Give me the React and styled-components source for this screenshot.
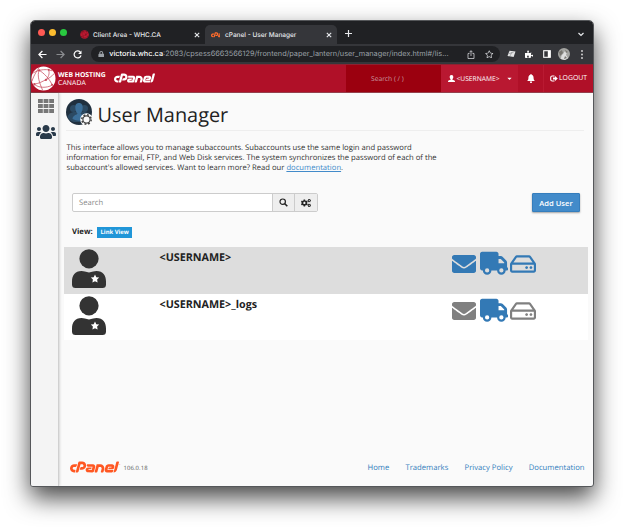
import React from "react";
import styled, { createGlobalStyle } from "styled-components";
import { FaCpanel, FaRegHdd, FaEnvelope, FaUsers, FaCogs, FaLock, FaPuzzlePiece, FaCaretDown, FaRegStar } from "react-icons/fa";
import { FaTruck } from "react-icons/fa6";

const GlobalStyle = createGlobalStyle`
  * { box-sizing: border-box; }
  body { margin: 0; background: #fff; overflow: hidden; font-family: "Open Sans", sans-serif; text-rendering: geometricPrecision; }
  svg { display: block; flex: none; }
`;

const Stage = styled.div`
  width: 624px;
  height: 527px;
  padding: 20px 30px 40px 30px;
  overflow: hidden;
`;
const Window = styled.div`
  width: 564px;
  height: 467px;
  border: 1px solid #55575a;
  border-radius: 5px 5px 3px 3px;
  overflow: hidden;
  background: #fafafa;
  box-shadow: 0 11px 25px rgba(0, 0, 0, 0.72);
  display: flex;
  flex-direction: column;
`;

/* Browser chrome */
const TabStrip = styled.div`
  height: 23px;
  flex: none;
  background: #202124;
  display: flex;
  align-items: center;
  color: #e8eaed;
  padding-left: 7px;
`;
const Light = styled.i`
  width: 7px;
  height: 7px;
  border-radius: 50%;
  margin-right: 4px;
  background: ${(p) => p.$color};
`;
const Tab = styled.div`
  width: ${(p) => p.$width}px;
  height: 19px;
  align-self: flex-end;
  margin-left: ${(p) => p.$gap || 0}px;
  padding: 0 5px 0 ${(p) => p.$pad}px;
  display: flex;
  align-items: center;
  border-radius: 5px 5px 0 0;
  background: ${(p) => (p.$active ? "#35363a" : "transparent")};
`;
const TabMark = styled.span`
  width: 9px;
  overflow: hidden;
  color: #ff6c2c;
`;
const TabTitle = styled.span`
  flex: 1;
  margin-left: ${(p) => p.$gap}px;
  font: 500 6.5px/10px Inter, sans-serif;
  white-space: nowrap;
`;
const NewTab = styled.div`
  margin: 2px 0 0 8px;
  flex: 1;
`;
const ChevronSlot = styled.div`
  width: 15px;
  margin-top: 3px;
`;
const Toolbar = styled.div`
  height: 20px;
  flex: none;
  background: #35363a;
  display: flex;
  align-items: center;
  padding-left: 7px;
  color: #e8eaed;
`;
const NavSlot = styled.div`
  width: 17.6px;
  display: flex;
  flex: none;
  justify-content: ${(p) => (p.$center ? "center" : "flex-start")};
`;
const UrlBar = styled.div`
  width: 409px;
  flex: none;
  height: 16px;
  border-radius: 8px;
  background: #202124;
  display: flex;
  align-items: center;
  padding: 0 6px 0 7px;
  color: #9aa0a6;
`;
const UrlText = styled.span`
  flex: 1;
  margin-left: 5px;
  font: 400 7.35px/12px Inter, sans-serif;
  white-space: nowrap;
  b { color: #fff; font-weight: 500; }
`;
const UrlIcons = styled.div`
  display: flex;
  gap: 10px;
  color: #d0d2d5;
`;
const Extensions = styled.div`
  display: flex;
  align-items: center;
  margin-left: 3px;
`;

/* cPanel header */
const Header = styled.header`
  height: 29px;
  flex: none;
  background: #b01028;
  border-top: 1px solid #8e2231;
  border-bottom: 1px solid #94404c;
  display: flex;
  align-items: center;
  color: #fff;
`;
const HostName = styled.div`
  width: 51px;
  margin: 0 0 0 2px;
  font: 700 6.8px/8px "Open Sans", sans-serif;
  white-space: nowrap;
`;
const HostCountry = styled.span`
  display: block;
  font-weight: 400;
  letter-spacing: 0.1px;
`;
const HeaderLogo = styled.div`
  height: 27px;
  margin-left: 5px;
  flex: 1;
  display: flex;
  align-items: center;
`;
const HeaderSearch = styled.div`
  width: 95px;
  height: 100%;
  padding-left: 25px;
  background: #9b000f;
  color: #c99ba0;
  font-size: 6.7px;
  line-height: 27px;
`;
const AccountMenu = styled.div`
  width: 77px;
  height: 100%;
  padding-left: 7px;
  background: #b91831;
  display: flex;
  align-items: center;
  font-size: 6.7px;
`;
const AccountName = styled.span`
  width: 49px;
  margin-left: 1.5px;
`;
const HeaderItem = styled.div`
  width: ${(p) => p.$w}px;
  height: 100%;
  border-right: ${(p) => (p.$last ? "none" : "1px solid #b91a32")};
  display: flex;
  align-items: center;
  justify-content: center;
  gap: 1px;
  font-size: 6.9px;
  white-space: nowrap;
`;

/* Page */
const Body = styled.div`
  flex: 1;
  display: flex;
  min-height: 0;
`;
const Sidebar = styled.aside`
  width: 28px;
  background: #f4f4f4;
  border-right: 1px solid #d0d0d0;
  box-shadow: 0 0 3px rgba(0, 0, 0, 0.25);
  padding: 6px 0 0 2px;
  display: flex;
  flex-direction: column;
  align-items: center;
  gap: 9px;
`;
const Main = styled.main`
  flex: 1;
  padding: 6px 5px 0 5px;
  display: flex;
  flex-direction: column;
`;
const TitleBar = styled.div`
  height: 32px;
  margin: 0 4px 0 2px;
  border-bottom: 1px solid #eee;
  display: flex;
`;
const Title = styled.h1`
  margin: 2px 0 0 3.5px;
  font: 400 19.9px/28px "Open Sans", sans-serif;
  color: #222;
`;
const Intro = styled.p`
  margin: 12px 0 0 2.5px;
  font-size: 7.67px;
  line-height: 10px;
  color: #333;
  white-space: nowrap;
`;
const DocLink = styled.a`
  color: #428bca;
  text-decoration: underline;
`;
const Controls = styled.div`
  display: flex;
  justify-content: space-between;
  margin: 20px 8px 0 8px;
  height: 19px;
`;
const SearchGroup = styled.div`
  width: 246px;
  display: flex;
  border: 1px solid #ccc;
  border-radius: 2px;
  background: #fff;
`;
const SearchField = styled.div`
  flex: 1;
  padding-left: 6px;
  font-size: 7.6px;
  line-height: 19px;
  color: #888;
`;
const SearchButton = styled.div`
  width: ${(p) => p.$w}px;
  border-left: 1px solid #ccc;
  background: #eee;
  color: #222;
  display: grid;
  place-items: center;
`;
const AddButton = styled.button`
  width: 48px;
  padding: 0;
  border: 1px solid #357ebd;
  border-radius: 1px;
  background: #428bca;
  box-shadow: 0 1px 2px rgba(0, 0, 0, 0.35);
  color: #fff;
  font: 600 7.6px/16px "Open Sans", sans-serif;
`;
const ViewLine = styled.div`
  display: flex;
  align-items: center;
  height: 12px;
  margin: 14px 0 0 8px;
  font: 700 7.7px/12px "Open Sans", sans-serif;
  color: #222;
`;
const ViewTag = styled.span`
  width: 35px;
  height: 11px;
  margin-left: 4.5px;
  background: #2096d8;
  color: #fff;
  font-size: 5.9px;
  line-height: 10.5px;
  text-align: center;
`;
const UserList = styled.div`
  margin-top: 9px;
`;
const UserRow = styled.div`
  height: ${(p) => p.$h}px;
  background: ${(p) => (p.$shade ? "#ddd" : "#fff")};
  display: flex;
  padding: 2px 0 0 8px;
`;
const UserName = styled.div`
  width: 292px;
  margin: 1.5px 0 0 53.5px;
  font: 700 10.75px/14px "Open Sans", sans-serif;
  color: #222;
`;
const Services = styled.div`
  display: flex;
  height: 29px;
  align-items: center;
`;
const Service = styled.span`
  color: ${(p) => (p.$off ? "#808080" : "#3379b5")};
  margin-right: ${(p) => p.$gap || 0}px;
`;
const Footer = styled.footer`
  margin: auto 3.5px 10.5px 5.5px;
  height: 16px;
  display: flex;
  align-items: center;
  color: #ff5722;
`;
const Trademark = styled.sup`
  width: 3px;
  margin: 0 0 6px 0;
  font-size: 2.5px;
  line-height: 4px;
`;
const Version = styled.span`
  flex: 1;
  margin: 1px 0 0 2px;
  font-size: 5.9px;
  letter-spacing: 0.1px;
  color: #555;
`;
const FooterLinks = styled.nav`
  display: flex;
  gap: 16.2px;
  font-size: 7.7px;
  color: #3380bd;
`;

const Close = () => (
  <svg width="6" height="6" viewBox="0 0 6 6" stroke="currentColor" strokeWidth="1.1"><path d="M.8.8l4.4 4.4M5.2.8L.8 5.2" /></svg>
);
const Arrow = ({ flip, color }) => (
  <svg width="9" height="9" viewBox="0 0 9 9" fill="none" stroke={color} strokeWidth="1.2">
    <path d={flip ? "M.5 4.5h7.3M4.6 1l3.5 3.5L4.6 8" : "M8.5 4.5H1.2M4.4 1L.9 4.5 4.4 8"} />
  </svg>
);
const Globe = ({ size, disc, line }) => (
  <svg width={size} height={size} viewBox="0 0 26 26" fill="none" stroke={line} strokeWidth=".8">
    <circle cx="13" cy="13" r="12.5" fill={disc} stroke="none" />
    <path d="M8.500 1.500C7 4 3 9 1 16M8.500 4.500C13 7 20 14 22 20M1 8C5 5 14 2 22 5M8.500 4.500C6 10 9 18 12 25M18 3C20 8 18 12 15 15M3 19C9 18 12 16 15 14.500C19 13 22 10 24 8M3.500 19C8 23 16 23 22 20" />
    <g fill={line} stroke="none"><circle cx="8.500" cy="4.500" r="1.200" /><circle cx="15.500" cy="14.500" r="1.200" /><circle cx="3.500" cy="19" r="1.200" /><circle cx="18.500" cy="4" r="1" /><circle cx="22" cy="19.500" r="1" /></g>
  </svg>
);
const AppBadge = () => (
  <svg width="28" height="28" viewBox="0 0 28 28">
    <circle cx="13" cy="13" r="13" fill="#20303f" />
    <g fill="#2c4a63"><circle cx="7.500" cy="9.500" r="3.500" /><circle cx="18.500" cy="9.500" r="3.500" /><path d="M1.500 18q1-4 6-5h11q5 1 6 5-2 4-6 5h-11q-4-1-6-5z" /></g>
    <path d="M9.300 8.500C9.300 5 11 4 13 4s3.700 1 3.700 4.500c0 3-1 5-2.200 6 .2 1.500 5 1.500 5 5.500q-6.500 3.500-13 0c0-4 4.800-4 5-5.500-1.200-1-2.200-3-2.200-6z" fill="#3c6f99" />
    <circle cx="20.500" cy="20.500" r="6.300" fill="#fafafa" />
    <circle cx="20.500" cy="20.500" r="4.700" fill="none" stroke="#444" strokeWidth="1.500" strokeDasharray="1.846 1.846" />
    <circle cx="20.500" cy="20.500" r="3.600" fill="#fafafa" stroke="#444" strokeWidth="1.200" />
  </svg>
);
const GridIcon = () => (
  <svg width="16" height="14" viewBox="0 0 16 14" fill="#777">
    {[0, 5.6, 11.2].map((x) => [0, 5, 10].map((y) => <rect key={`${x}-${y}`} x={x} y={y} width="4.800" height="4" />))}
  </svg>
);
const Bust = () => (
  <svg width="7" height="7" viewBox="0 0 7 7" fill="#fff"><path d="M3.500 0C4.800 0 5.300.9 5.300 2c0 .9-.4 1.800-.9 2.200v.5C5.200 5.100 7 5.300 7 6.500V7H0v-.5C0 5.300 1.800 5.100 2.600 4.700v-.5C2.100 3.800 1.700 2.900 1.700 2 1.700.9 2.200 0 3.500 0z" /></svg>
);
const Bell = () => (
  <svg width="8" height="9" viewBox="0 0 8 9" fill="#fff"><path d="M4 0c.5 0 .7.300.7.700C6.200 1.100 6.600 2.500 6.600 4c0 1.500.4 2.400 1.400 3H0c1-.6 1.400-1.500 1.400-3 0-1.500.4-2.900 1.900-3.300C3.300.3 3.500 0 4 0zM2.900 7.500h2.200C5.100 8.500 4.600 9 4 9s-1.100-.5-1.100-1.500z" /></svg>
);
const Person = () => (
  <svg width="34" height="40" viewBox="0 0 34 40" fill="#333">
    <circle cx="17" cy="9.800" r="9.600" />
    <path d="M9.500 22q3 0 7.500 1.500Q21.500 22 24.500 22C31 22 34 26.500 34 32.500V35.500Q34 39 30.500 39h-27Q0 39 0 35.500v-3C0 26.500 3 22 9.500 22z" />
    <path fill="#fff" d="M23 25.500l1.300 2.700 2.900.4-2.100 2 .5 3-2.600-1.400-2.600 1.400.5-3-2.100-2 2.900-.4z" />
  </svg>
);

const users = [
  { name: "<USERNAME>", shade: true, height: 47 },
  { name: "<USERNAME>_logs", off: true, height: 46 },
];

export default function App() {
  return (
    <Stage>
      <GlobalStyle />
      <Window>
        <TabStrip>
          <Light $color="#ff5a54" /><Light $color="#fbbc2f" /><Light $color="#29c940" />
          <Tab $width={130} $gap={4} $pad={5}>
            <Globe size={9} disc="#c01a32" line="#571520" />
            <TabTitle $gap={4}>Client Area - WHC.CA</TabTitle>
            <Close />
          </Tab>
          <Tab $width={132} $pad={6} $active>
            <TabMark><FaCpanel size={22} /></TabMark>
            <TabTitle $gap={5}>cPanel - User Manager</TabTitle>
            <Close />
          </Tab>
          <NewTab>
            <svg width="7" height="7" viewBox="0 0 7 7" stroke="currentColor" strokeWidth="1.200"><path d="M3.500 0v7M0 3.500h7" /></svg>
          </NewTab>
          <ChevronSlot>
            <svg width="6" height="5" viewBox="0 0 6 5" fill="none" stroke="currentColor" strokeWidth="1.200"><path d="M.5 1L3 3.500 5.500 1" /></svg>
          </ChevronSlot>
        </TabStrip>
        <Toolbar>
          <NavSlot><Arrow color="#fff" /></NavSlot>
          <NavSlot><Arrow flip color="#8b8d90" /></NavSlot>
          <NavSlot>
            <svg width="9" height="9" viewBox="0 0 9 9" fill="none" stroke="#fff" strokeWidth="1.200"><path d="M7.300 2.200A3.500 3.500 0 1 0 8 5.300" /><path d="M8.500.5v3.400H5.100z" fill="#fff" stroke="none" /></svg>
          </NavSlot>
          <UrlBar>
            <FaLock size={6.5} />
            <UrlText><b>victoria.whc.ca</b>:2083/cpsess6663566129/frontend/paper_lantern/user_manager/index.html#/lis...</UrlText>
            <UrlIcons>
              <svg width="8" height="9" viewBox="0 0 8 9" fill="none" stroke="currentColor" strokeWidth=".8"><path d="M2.500 3.500H1v5h6v-5H5.500M4 6V.8M2.400 2.300L4 .7l1.600 1.600" /></svg>
              <FaRegStar size={8.5} />
            </UrlIcons>
          </UrlBar>
          <Extensions>
            <NavSlot $center>
              <svg width="9" height="8" viewBox="0 0 9 8" fill="#e4e5e6"><path d="M2.500.7L8.500 1.500 6.600 7 .5 6z" /><path d="M1.500 3.700l5-1.300M3 6l2-4" stroke="#85878a" strokeWidth=".6" /></svg>
            </NavSlot>
            <NavSlot $center><FaPuzzlePiece size={8.5} color="#fff" /></NavSlot>
            <NavSlot $center>
              <svg width="8" height="8" viewBox="0 0 8 8"><rect x=".7" y=".7" width="6.600" height="6.600" fill="none" stroke="#fff" strokeWidth="1.100" /><rect x="4.800" y=".7" width="2.500" height="6.600" fill="#fff" /></svg>
            </NavSlot>
            <NavSlot $center>
              <svg width="12" height="12" viewBox="0 0 12 12"><circle cx="6" cy="6" r="6" fill="#a4a4a1" /><path d="M3 11q0-4 2-5l2-3 2 1-1 3 2 3-3 2z" fill="#dedede" /><path d="M1 4l3-2 1 3-3 3zM7 2l3 2-2 1zM7 8l2 2-3 1z" fill="#77756f" /></svg>
            </NavSlot>
            <NavSlot $center>
              <svg width="2" height="9" viewBox="0 0 2 9" fill="#ddd"><circle cx="1" cy="1" r=".9" /><circle cx="1" cy="4.500" r=".9" /><circle cx="1" cy="8" r=".9" /></svg>
            </NavSlot>
          </Extensions>
        </Toolbar>
        <Header>
          <Globe size={25} disc="#fff" line="#c84d5f" />
          <HostName>WEB HOSTING<HostCountry>CANADA</HostCountry></HostName>
          <HeaderLogo><FaCpanel size={41} /></HeaderLogo>
          <HeaderSearch>Search ( / )</HeaderSearch>
          <AccountMenu><Bust /><AccountName>&lt;USERNAME&gt;</AccountName><FaCaretDown size={7} /></AccountMenu>
          <HeaderItem $w={26}><Bell /></HeaderItem>
          <HeaderItem $w={49} $last>
            <svg width="8" height="7" viewBox="0 0 8 7" fill="none" stroke="#fff"><path d="M4.500 1H2.200Q.7 1 .7 2.500v2Q.7 6 2.200 6h2.300" strokeWidth="1.100" /><path d="M3 2.600h2V.9l2.800 2.600L5 6.100V4.400H3z" fill="#fff" stroke="none" /></svg>
            LOGOUT
          </HeaderItem>
        </Header>
        <Body>
          <Sidebar>
            <GridIcon />
            <FaUsers size={20} color="#293a4a" />
          </Sidebar>
          <Main>
            <TitleBar><AppBadge /><Title>User Manager</Title></TitleBar>
            <Intro>
              This interface allows you to manage subaccounts. Subaccounts use the same login and password<br />
              information for email, FTP, and Web Disk services. The system synchronizes the password of each of the<br />
              subaccount's allowed services. Want to learn more? Read our <DocLink>documentation</DocLink>.
            </Intro>
            <Controls>
              <SearchGroup>
                <SearchField>Search</SearchField>
                <SearchButton $w={22}>
                  <svg width="9" height="9" viewBox="0 0 9 9" fill="none" stroke="currentColor" strokeWidth="1.200"><circle cx="3.700" cy="3.700" r="2.700" /><path d="M5.800 5.800L8.300 8.300" strokeWidth="1.600" /></svg>
                </SearchButton>
                <SearchButton $w={23}><FaCogs size={10} /></SearchButton>
              </SearchGroup>
              <AddButton>Add User</AddButton>
            </Controls>
            <ViewLine>View:<ViewTag>Link View</ViewTag></ViewLine>
            <UserList>
              {users.map((u) => (
                <UserRow key={u.name} $shade={u.shade} $h={u.height}>
                  <Person />
                  <UserName>{u.name}</UserName>
                  <Services>
                    <Service $off={u.off} $gap={4}><FaEnvelope size={24} /></Service>
                    <Service $gap={1.5}><FaTruck size={28.5} /></Service>
                    <Service $off={u.off}><FaRegHdd size={26} /></Service>
                  </Services>
                </UserRow>
              ))}
            </UserList>
            <Footer>
              <FaCpanel size={49} />
              <Trademark>™</Trademark>
              <Version>106.0.18</Version>
              <FooterLinks><span>Home</span><span>Trademarks</span><span>Privacy Policy</span><span>Documentation</span></FooterLinks>
            </Footer>
          </Main>
        </Body>
      </Window>
    </Stage>
  );
}
